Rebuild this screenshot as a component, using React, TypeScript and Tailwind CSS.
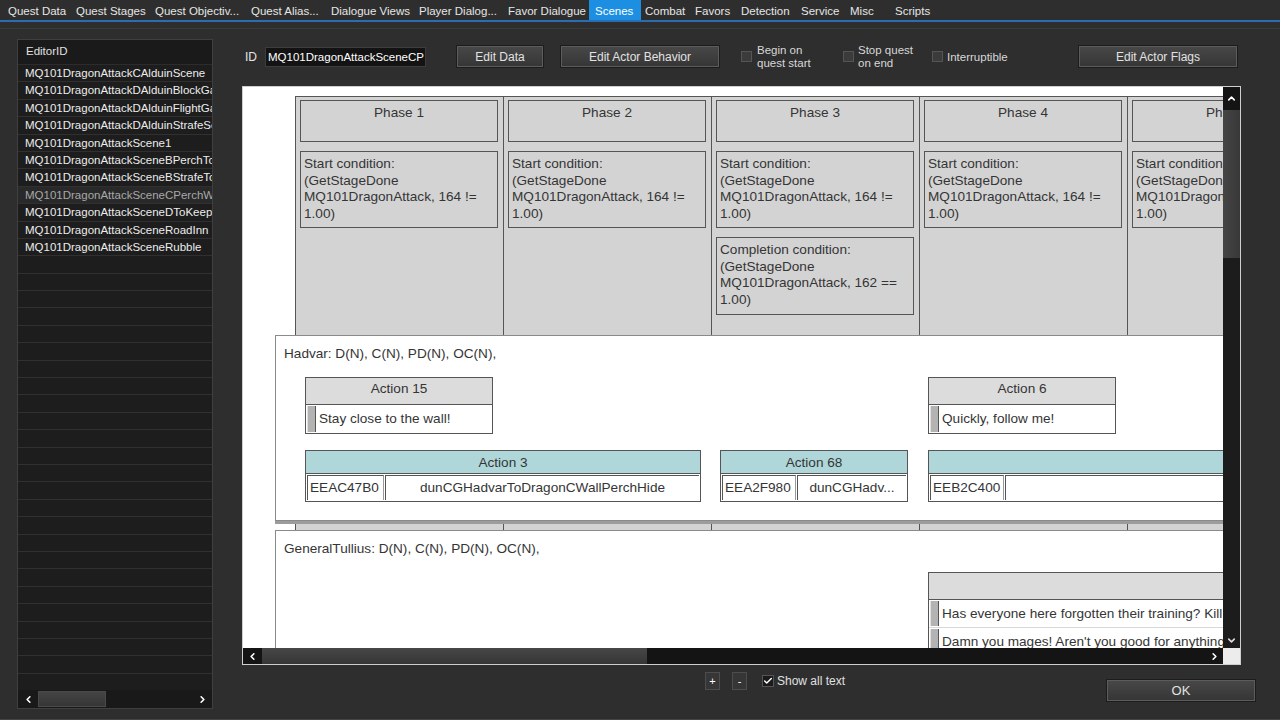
import { ChevronLeft, ChevronRight, ChevronUp, ChevronDown, Check } from "lucide-react";

const tabs = [
  { label: "Quest Data", cls: "w-[68px]" },
  { label: "Quest Stages", cls: "w-[79px]" },
  { label: "Quest Objectiv...", cls: "w-[96px]" },
  { label: "Quest Alias...", cls: "w-[80px]" },
  { label: "Dialogue Views", cls: "w-[88px]" },
  { label: "Player Dialog...", cls: "w-[89px]" },
  { label: "Favor Dialogue", cls: "w-[81px]" },
  { label: "Scenes", cls: "w-[52px] pl-[6px] bg-[#1d8fe2] text-white", sel: true },
  { label: "Combat", cls: "w-[50px] pl-[4px]" },
  { label: "Favors", cls: "w-[46px] pl-[4px]" },
  { label: "Detection", cls: "w-[60px] pl-[4px]" },
  { label: "Service", cls: "w-[49px] pl-[4px]" },
  { label: "Misc", cls: "w-[45px] pl-[4px]" },
  { label: "Scripts", cls: "w-[60px] pl-[4px]" },
];

const scenes = [
  "MQ101DragonAttackCAlduinScene",
  "MQ101DragonAttackDAlduinBlockGate",
  "MQ101DragonAttackDAlduinFlightGate",
  "MQ101DragonAttackDAlduinStrafeScene",
  "MQ101DragonAttackScene1",
  "MQ101DragonAttackSceneBPerchTower",
  "MQ101DragonAttackSceneBStrafeTower",
  "MQ101DragonAttackSceneCPerchWall",
  "MQ101DragonAttackSceneDToKeep",
  "MQ101DragonAttackSceneRoadInn",
  "MQ101DragonAttackSceneRubble",
];

function Btn({ label, cls }: { label: string; cls: string }) {
  return (
    <div
      className={`h-[21px] flex items-center justify-center bg-gradient-to-b from-[#474747] to-[#363636] border border-[#5c5c5c] outline outline-1 outline-[#1c1c1c] text-[12px] text-[#e2e2e2] ${cls}`}
    >
      {label}
    </div>
  );
}

function Box() {
  return <div className="w-[11px] h-[11px] bg-[#3b3b3b] border border-[#555] shrink-0" />;
}

function CondBox({ lines, cls }: { lines: string[]; cls: string }) {
  return (
    <div className={`mt-[9px] w-[198px] border border-[#555] px-[3px] pt-[4px] leading-[16.6px] whitespace-nowrap overflow-hidden ${cls}`}>
      {lines.map((l, i) => (
        <div key={i}>{l}</div>
      ))}
    </div>
  );
}

const startLines = ["Start condition:", "(GetStageDone", "MQ101DragonAttack, 164 !=", "1.00)"];
const compLines = ["Completion condition:", "(GetStageDone", "MQ101DragonAttack, 162 ==", "1.00)"];

function Phase({ n }: { n: number }) {
  return (
    <div className="w-[208px] shrink-0 h-full bg-[#d3d3d3] border-t border-r border-[#555] pl-[4px] pt-[3px]">
      <div className="w-[198px] h-[42px] border border-[#555] text-center pt-[2px] whitespace-nowrap">Phase {n}</div>
      <CondBox lines={startLines} cls="h-[77px]" />
      {n === 3 && <CondBox lines={compLines} cls="h-[78px]" />}
    </div>
  );
}

function DlgAction({ title, lines, cls }: { title: string; lines: string[]; cls: string }) {
  return (
    <div className={`border border-[#555] bg-white shrink-0 ${cls}`}>
      <div className="h-[27px] bg-[#dcdcdc] border-b border-[#555] text-center leading-[21px] whitespace-nowrap">{title}</div>
      {lines.map((l, i) => (
        <div key={i} className="h-[28px] flex p-[1px] border-b border-[#d8d8d8] last:border-b-0">
          <div className="w-[9px] shrink-0 bg-[#b3b3b3] border-l border-[#e0e0e0] border-r border-r-[#555]" />
          <div className="pl-[3px] leading-[26px] whitespace-nowrap overflow-hidden">{l}</div>
        </div>
      ))}
    </div>
  );
}

function PkgAction({ title, id, name, cls, idW }: { title: string; id: string; name: string; cls: string; idW: string }) {
  return (
    <div className={`border border-[#555] bg-white shrink-0 ${cls}`}>
      <div className="h-[23px] bg-[#afd7d9] border-b border-[#555] text-center leading-[23px] whitespace-nowrap">{title}</div>
      <div className="h-[27px] flex p-[1px] gap-[1px]">
        <div className={`shrink-0 border-l border-t border-[#555] border-r border-r-[#999] pl-[2px] leading-[24px] whitespace-nowrap ${idW}`}>{id}</div>
        <div className="flex-1 border-l border-t border-[#555] text-center leading-[24px] whitespace-nowrap overflow-hidden">{name}</div>
      </div>
    </div>
  );
}

export default function App() {
  return (
    <div className="w-[1280px] h-[720px] overflow-hidden bg-[#2e2e2e] text-[#e6e6e6] font-['Liberation_Sans',Arial,sans-serif] flex flex-col">
      {/* Tab bar */}
      <div className="h-[22px] shrink-0 flex border-b-2 border-[#2c6cb0] pl-[8px] text-[11.5px]">
        {tabs.map((t) => (
          <div key={t.label} className={`h-[20px] leading-[22px] whitespace-nowrap shrink-0 ${t.cls}`}>
            {t.label}
          </div>
        ))}
      </div>

      {/* Main */}
      <div className="flex-1 mt-[6px] border-t border-[#3b3b3b] border-b border-b-[#444] flex">
        {/* Left list */}
        <div className="ml-[17px] mt-[10px] w-[196px] h-[670px] border border-[#3f3f3f] bg-[#1d1d1d] flex flex-col text-[11.5px]">
          <div className="h-[25px] shrink-0 bg-[#1a1a1a] pl-[8px] leading-[23px] text-[#e0e0e0] border-b border-[#2c2c2c]">EditorID</div>
          <div className="flex-1 overflow-hidden">
            {Array.from({ length: 40 }).map((_, i) => {
              const s = scenes[i];
              const sel = i === 7;
              return (
                <div
                  key={i}
                  className={`h-[17.4px] border-b border-[#303030] pl-[7px] leading-[16.4px] whitespace-nowrap overflow-hidden ${sel ? "bg-[#292929] text-[#a8a8a8]" : "text-[#ececec]"}`}
                >
                  {s ?? ""}
                </div>
              );
            })}
          </div>
          <div className="h-[18px] shrink-0 bg-[#191919] flex items-center">
            <div className="w-[20px] flex justify-center text-white">
              <ChevronLeft size={11} strokeWidth={3.5} />
            </div>
            <div className="w-[68px] h-[16px] bg-gradient-to-b from-[#444] to-[#363636] border border-[#4a4a4a]" />
            <div className="flex-1" />
            <div className="w-[20px] flex justify-center text-white">
              <ChevronRight size={11} strokeWidth={3.5} />
            </div>
          </div>
        </div>

        {/* Right */}
        <div className="ml-[29px] flex flex-col">
          {/* top row */}
          <div className="mt-[17px] h-[21px] flex items-center text-[11.5px]">
            <div className="ml-[3px] w-[12px] text-[12px]">ID</div>
            <div className="ml-[8px] w-[161px] h-[20px] bg-[#131313] border border-[#3d3d3d] pl-[2px] leading-[18px] text-white overflow-hidden whitespace-nowrap">
              MQ101DragonAttackSceneCP
            </div>
            <Btn label="Edit Data" cls="ml-[31px] w-[86px]" />
            <Btn label="Edit Actor Behavior" cls="ml-[18px] w-[158px]" />
            <div className="ml-[22px] w-[102px] flex items-center">
              <Box />
              <div className="ml-[5px] leading-[13px] text-[#d8d8d8]">
                <div>Begin on</div>
                <div>quest start</div>
              </div>
            </div>
            <div className="w-[89px] flex items-center">
              <Box />
              <div className="ml-[4px] leading-[13px] text-[#d8d8d8]">
                <div>Stop quest</div>
                <div>on end</div>
              </div>
            </div>
            <div className="w-[147px] flex items-center">
              <Box />
              <div className="ml-[4px] mt-[2px] text-[#d8d8d8]">Interruptible</div>
            </div>
            <Btn label="Edit Actor Flags" cls="w-[158px]" />
          </div>

          {/* Canvas */}
          <div className="mt-[19px] w-[999px] h-[579px] border border-[#cfcfcf] flex flex-col">
            <div className="flex h-[561px]">
              <div className="relative w-[980px] h-[561px] overflow-hidden bg-white text-[13.6px] text-[#353535]">
                <div className="flex ml-[52px] mt-[9px] h-[600px] border-l border-[#555]">
                  {[1, 2, 3, 4, 5].map((n) => (
                    <Phase key={n} n={n} />
                  ))}
                </div>

                {/* Hadvar */}
                <div className="absolute left-[32px] top-[248px] w-[1000px] h-[186px] bg-white border border-[#8a8a8a] shadow-[0_3px_0_#9c9c9c]">
                  <div className="pl-[8px] pt-[9px] leading-[17px]">Hadvar: D(N), C(N), PD(N), OC(N),</div>
                  <div className="flex ml-[29px] mt-[15px]">
                    <DlgAction title="Action 15" lines={["Stay close to the wall!"]} cls="w-[188px]" />
                    <DlgAction title="Action 6" lines={["Quickly, follow me!"]} cls="ml-[435px] w-[188px]" />
                  </div>
                  <div className="flex ml-[29px] mt-[16px]">
                    <PkgAction title="Action 3" id="EEAC47B0" name="dunCGHadvarToDragonCWallPerchHide" cls="w-[396px]" idW="w-[77px]" />
                    <PkgAction title="Action 68" id="EEA2F980" name="dunCGHadv..." cls="ml-[19px] w-[188px]" idW="w-[74px]" />
                    <PkgAction title="" id="EEB2C400" name="" cls="ml-[20px] w-[320px]" idW="w-[74px]" />
                  </div>
                </div>

                {/* GeneralTullius */}
                <div className="absolute left-[32px] top-[443px] w-[1000px] h-[300px] bg-white border border-[#8a8a8a]">
                  <div className="pl-[8px] pt-[9px] leading-[17px]">GeneralTullius: D(N), C(N), PD(N), OC(N),</div>
                  <div className="flex ml-[652px] mt-[15px]">
                    <DlgAction
                      title=""
                      lines={["Has everyone here forgotten their training? Kill them!", "Damn you mages! Aren't you good for anything?"]}
                      cls="w-[320px]"
                    />
                  </div>
                </div>
              </div>

              {/* V scroll */}
              <div className="w-[17px] flex flex-col bg-[#1c1c1c]">
                <div className="h-[23px] bg-[#141414] flex items-center justify-center text-white">
                  <ChevronUp size={11} strokeWidth={3.5} />
                </div>
                <div className="h-[148px] bg-gradient-to-r from-[#454545] to-[#383838]" />
                <div className="flex-1" />
                <div className="h-[16px] flex items-center justify-center text-[#dcdcdc]">
                  <ChevronDown size={11} strokeWidth={3.5} />
                </div>
              </div>
            </div>

            {/* H scroll */}
            <div className="h-[16px] flex">
              <div className="w-[19px] bg-[#141414] flex items-center justify-center text-white">
                <ChevronLeft size={11} strokeWidth={3.5} />
              </div>
              <div className="w-[385px] bg-gradient-to-b from-[#474747] to-[#363636]" />
              <div className="flex-1 bg-[#141414] flex items-center justify-end pr-[3px] text-white">
                <ChevronRight size={11} strokeWidth={3.5} />
              </div>
              <div className="w-[17px] bg-[#ececec]" />
            </div>
          </div>

          {/* Bottom row */}
          <div className="mt-[7px] flex items-start">
            <div className="w-[865px] flex items-start">
              <div className="ml-[463px] w-[15px] h-[18px] bg-[#363636] border border-[#4d4d4d] flex items-center justify-center text-[11px] text-white">+</div>
              <div className="ml-[12px] w-[15px] h-[18px] bg-[#363636] border border-[#4d4d4d] flex items-center justify-center text-[11px] text-white">-</div>
              <div className="ml-[15px] mt-[3px] w-[12px] h-[12px] bg-[#1a1a1a] border border-[#555] flex items-center justify-center text-white">
                <Check size={10} strokeWidth={3.5} />
              </div>
              <div className="ml-[3px] leading-[18px] text-[12px] text-[#e0e0e0]">Show all text</div>
            </div>
            <Btn label="OK" cls="mt-[8px] w-[148px] h-[20px] text-[13px]" />
          </div>
        </div>
      </div>
    </div>
  );
}
